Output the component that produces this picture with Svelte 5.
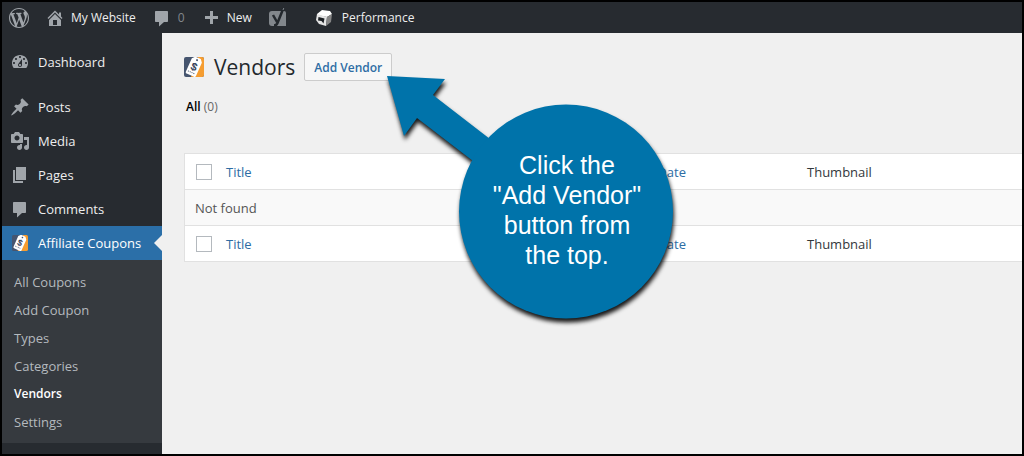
<script lang="ts">
	interface MenuItem {
		label: string;
		icon: string;
	}

	const icons = {
		wordpress:
			'M20 10c0-5.51-4.49-10-10-10C4.48 0 0 4.49 0 10c0 5.52 4.48 10 10 10 5.51 0 10-4.48 10-10zM7.78 15.37L4.37 6.22c.55-.02 1.17-.08 1.17-.08.5-.06.44-1.13-.06-1.11 0 0-1.45.11-2.37.11-.18 0-.37 0-.58-.01C4.12 2.69 6.87 1.11 10 1.11c2.33 0 4.45.87 6.05 2.34-.68-.11-1.65.39-1.65 1.58 0 .74.45 1.36.9 2.1.35.61.55 1.36.55 2.46 0 1.49-1.4 5-1.4 5l-3.03-8.37c.54-.02.82-.17.82-.17.5-.05.44-1.25-.06-1.22 0 0-1.44.12-2.38.12-.87 0-2.33-.12-2.33-.12-.5-.03-.56 1.2-.06 1.22l.92.08 1.26 3.41zM17.41 10c.24-.64.74-1.87.43-4.25.7 1.29 1.05 2.71 1.05 4.25 0 3.29-1.73 6.24-4.4 7.78.97-2.59 1.94-5.2 2.92-7.78zM6.1 18.09C3.12 16.65 1.11 13.53 1.11 10c0-1.3.23-2.48.72-3.59C3.25 10.3 4.67 14.2 6.1 18.09zm4.03-6.63l2.58 6.98c-.86.29-1.76.45-2.71.45-.79 0-1.57-.11-2.29-.33.81-2.38 1.62-4.74 2.42-7.1z',
		home: 'M16 8.5l1.53 1.53-1.06 1.06L10 4.6l-6.47 6.49-1.06-1.06L10 2.5l4 4v-2h2v4zm-6-2.46l6 5.99V18H4v-5.97zM12 17v-5H8v5h4z',
		comment:
			'M4 3h11c.6 0 1 .4 1 1v9c0 .6-.4 1-1 1h-3l-5 4.500v-4.500H4c-.6 0-1-.4-1-1V4c0-.6.4-1 1-1z',
		plus: 'M17 8v3h-5v5H9v-5H4V8h5V3h3v5h5z',
		dashboard:
			'M3.76 16h12.48c1.1-1.37 1.76-3.11 1.76-5 0-4.42-3.58-8-8-8s-8 3.58-8 8c0 1.89.66 3.63 1.76 5zM10 4c.55 0 1 .45 1 1s-.45 1-1 1-1-.45-1-1 .45-1 1-1zM6 6c.55 0 1 .45 1 1s-.45 1-1 1-1-.45-1-1 .45-1 1-1zm8 0c.55 0 1 .45 1 1s-.45 1-1 1-1-.45-1-1 .45-1 1-1zm-5.37 5.55L12 7v6c0 1.1-.9 2-2 2s-2-.9-2-2c0-.57.24-1.08.63-1.45zM4 10c.55 0 1 .45 1 1s-.45 1-1 1-1-.45-1-1 .45-1 1-1zm12 0c.55 0 1 .45 1 1s-.45 1-1 1-1-.45-1-1 .45-1 1-1zm-5 3c0-.55-.45-1-1-1s-1 .45-1 1 .45 1 1 1 1-.45 1-1z',
		posts: 'M10.44 3.02l1.82-1.82 6.36 6.35-1.83 1.82c-1.05-.68-2.48-.57-3.41.36l-.75.75c-.92.93-1.04 2.35-.35 3.41l-1.83 1.82-2.41-2.41-2.8 2.79c-.42.42-3.38 2.71-3.8 2.29s1.86-3.39 2.28-3.81l2.79-2.79L4.1 9.36l1.83-1.82c1.05.69 2.48.57 3.4-.36l.75-.75c.93-.92 1.05-2.35.36-3.41z',
		media: 'M13 11V4c0-.55-.45-1-1-1h-1.67L9 1H5L3.67 3H2c-.55 0-1 .45-1 1v7c0 .55.45 1 1 1h10c.55 0 1-.45 1-1zM7 4.5c1.38 0 2.5 1.12 2.5 2.5S8.38 9.5 7 9.5 4.5 8.38 4.5 7 5.62 4.5 7 4.5zM14 6h5v10.5c0 1.38-1.12 2.5-2.5 2.5S14 17.88 14 16.5s1.12-2.5 2.5-2.5c.17 0 .34.02.5.05V9h-3V6zm-4 8.05V13h2v3.5c0 1.38-1.12 2.5-2.5 2.5S7 17.88 7 16.5 8.12 14 9.5 14c.17 0 .34.02.5.05z',
		pages: 'M6 15V2h10v13H6zm-1 1h8v2H3V5h2v11z'
	};

	const contentMenu: MenuItem[] = [
		{ label: 'Posts', icon: icons.posts },
		{ label: 'Media', icon: icons.media },
		{ label: 'Pages', icon: icons.pages },
		{ label: 'Comments', icon: icons.comment }
	];

	const submenu = ['All Coupons', 'Add Coupon', 'Types', 'Categories', 'Vendors', 'Settings'];
	const current = 'Vendors';

	let allChecked = $state(false);
</script>

{#snippet dashicon(path: string)}
	<svg class="icon" viewBox="0 0 20 20" aria-hidden="true"><path d={path} /></svg>
{/snippet}

{#snippet couponLogo(size: number)}
	<svg class="logo" width={size} height={size} viewBox="0 0 20 20" aria-hidden="true">
		<rect width="20" height="20" rx="2" fill="#46556f" />
		<path d="M14 0h4a2 2 0 0 1 2 2v16a2 2 0 0 1-2 2H7z" fill="#f59d31" />
		<g transform="rotate(24 10 10)">
			<path d="M7 0h6l2.500 3v14.500a1.500 1.500 0 0 1-1.500 1.500H6a1.500 1.500 0 0 1-1.500-1.500V3z" fill="#fff" />
			<circle cx="10" cy="2.500" r="1" fill="#46556f" />
			<path d="M6 16h8" stroke="#46556f" stroke-dasharray="1 1" />
			<text x="10" y="13.500" text-anchor="middle">$</text>
		</g>
	</svg>
{/snippet}

{#snippet columns(position: string)}
	<tr>
		<td class="check">
			<input type="checkbox" aria-label="Select all ({position})" bind:checked={allChecked} />
		</td>
		<th scope="col"><a href="#title">Title</a></th>
		<th scope="col" class="date"><a href="#date">Date</a></th>
		<th scope="col" class="thumbnail">Thumbnail</th>
	</tr>
{/snippet}

<div class="admin">
	<header class="adminbar">
		<a class="wp" href="#about" aria-label="About WordPress">{@render dashicon(icons.wordpress)}</a>
		<a class="site" href="#site">{@render dashicon(icons.home)}<span>My Website</span></a>
		<a class="count" href="#comments">{@render dashicon(icons.comment)}<span>0</span></a>
		<a class="new" href="#new">{@render dashicon(icons.plus)}<span>New</span></a>
		<a class="seo" href="#seo" aria-label="SEO">
			<svg class="icon" viewBox="0 0 20 20" aria-hidden="true">
				<path d="M4 3h12a2 2 0 0 1 2 2v13H4a3 3 0 0 1-3-3V6a3 3 0 0 1 3-3z" />
				<path d="M5 7l4 7M15.500 0l-6 15q-1 2.500-3.500 2.500" fill="none" stroke="#23282d" stroke-width="2.500" />
				<path d="M15.800 0l-.8 2" stroke="#82878c" />
			</svg>
		</a>
		<a class="performance" href="#performance">
			<svg class="icon" viewBox="0 0 20 20" aria-hidden="true">
				<path d="M3 6l5-4 8 1 2 3-5 3-10-2z" fill="#fff" />
				<path d="M3 6l10 3-1 9-7-2-3-4z" fill="#e4e4e4" />
				<path d="M13 9l5-3-1 8-5 4z" fill="#858585" />
				<path d="M4.500 9l6 1.500-1 5-2-2.500-3.500-.5z" fill="#1c2024" />
			</svg>
			<span>Performance</span>
		</a>
	</header>

	<div class="body">
		<nav class="sidebar" aria-label="Main menu">
			<a class="item" href="#dashboard">{@render dashicon(icons.dashboard)}Dashboard</a>
			<div class="separator"></div>
			{#each contentMenu as item (item.label)}
				<a class="item" href="#{item.label.toLowerCase()}">{@render dashicon(item.icon)}{item.label}</a>
			{/each}
			<a class="item active" href="#coupons">
				<span class="icon">{@render couponLogo(16)}</span>Affiliate Coupons
			</a>
			<ul class="submenu">
				{#each submenu as label (label)}
					<li><a href="#{label}" class:current={label === current}>{label}</a></li>
				{/each}
			</ul>
		</nav>

		<main>
			<div class="heading">
				{@render couponLogo(20)}
				<h1>Vendors</h1>
				<button type="button">Add Vendor</button>
			</div>
			<p class="filter"><a href="#all">All</a> <span>(0)</span></p>

			<table>
				<thead>{@render columns('top')}</thead>
				<tbody>
					<tr><td class="empty" colspan="4">Not found</td></tr>
				</tbody>
				<tfoot>{@render columns('bottom')}</tfoot>
			</table>

			<div class="callout">
				<svg width="300" height="260" viewBox="0 0 300 260" aria-hidden="true">
					<path d="M7 6l58 3-12 16 57 44-17 22-56-43-13 18z" />
					<circle cx="186" cy="141.500" r="107" />
				</svg>
				<p>Click the<br />"Add Vendor"<br />button from<br />the top.</p>
			</div>
		</main>
	</div>
</div>

<style>
	:global(body) {
		margin: 0;
	}

	.admin {
		box-sizing: border-box;
		min-height: 100vh;
		display: flex;
		flex-direction: column;
		border: 2px solid #000;
		background: #f0f0f0;
		color: #32373c;
		font: 13px/20px 'Open Sans', 'Noto Sans', sans-serif;
	}

	a {
		color: #2e6da4;
		text-decoration: none;
	}

	.icon {
		width: 20px;
		height: 20px;
		flex: none;
		fill: #a0a5aa;
	}

	.logo {
		display: block;
		flex: none;
	}

	.logo text {
		font: bold 11px 'Liberation Sans', sans-serif;
		fill: #35435c;
	}

	.adminbar {
		display: flex;
		align-items: center;
		height: 31px;
		padding-left: 7px;
		background: #272b30;
		font-size: 12px;
	}

	.adminbar a {
		display: flex;
		align-items: center;
		gap: 6px;
		margin-right: 16px;
		color: #eee;
	}

	.adminbar .count {
		color: #82878c;
	}

	.adminbar .seo {
		margin-right: 26px;
	}

	.adminbar .seo .icon {
		fill: #82878c;
	}

	.adminbar .performance {
		gap: 8px;
	}

	.body {
		flex: 1;
		display: flex;
	}

	.sidebar {
		width: 160px;
		flex: none;
		padding-top: 12px;
		background: #272b30;
	}

	.item {
		position: relative;
		display: flex;
		align-items: center;
		gap: 8px;
		height: 34px;
		padding-left: 8px;
		color: #eee;
	}

	.separator {
		height: 11px;
	}

	.active {
		background: #2b6fa8;
		color: #fff;
	}

	.active .icon {
		display: grid;
		place-items: center;
	}

	.active::after {
		content: '';
		position: absolute;
		right: 0;
		border: 8px solid transparent;
		border-right-color: #f0f0f0;
	}

	.submenu {
		margin: 0;
		padding: 8px 0 7px;
		background: #363a3f;
		list-style: none;
	}

	.submenu a {
		display: block;
		padding: 4px 12px;
		color: #b4b9be;
	}

	.submenu .current {
		color: #fff;
		font-size: 12px;
		font-weight: 600;
	}

	main {
		position: relative;
		flex: 1;
		min-width: 0;
		padding: 17px 0 0 22px;
	}

	.heading {
		display: flex;
		align-items: center;
		height: 34px;
	}

	h1 {
		margin: 0 9px 0 10px;
		color: #23282d;
		font-size: 21px;
		font-weight: 400;
	}

	button {
		height: 28px;
		padding: 0 9px;
		border: 1px solid #ccc;
		border-radius: 2px;
		background: #f7f7f7;
		color: #2e6da4;
		font: 600 12px 'Open Sans', sans-serif;
	}

	.filter {
		margin: 13px 0 36px;
		padding-left: 2px;
		color: #666;
		font-size: 12px;
	}

	.filter a {
		color: #000;
		font-weight: 600;
	}

	table {
		width: 100%;
		table-layout: fixed;
		border: 1px solid #e1e1e1;
		border-right: 0;
		border-spacing: 0;
		background: #fff;
	}

	th,
	td {
		box-sizing: border-box;
		height: 35px;
		padding: 0 10px;
		font-weight: 400;
		text-align: left;
	}

	.check {
		width: 31px;
		padding: 0 0 0 11px;
	}

	.date {
		width: 18%;
		padding-left: 12px;
	}

	.thumbnail {
		width: 27%;
		padding-left: 11px;
	}

	.empty {
		height: 37px;
		border: 1px solid #e1e1e1;
		border-width: 1px 0;
		background: #f9f9f9;
		color: #555;
	}

	input {
		appearance: none;
		display: block;
		width: 16px;
		height: 16px;
		margin: 0;
		border: 1px solid #b4b9be;
		background: #fff;
	}

	input:checked {
		background: #2b6fa8;
	}

	/* floats over the list, arrow tip at the Add Vendor button */
	.callout {
		position: absolute;
		top: 37px;
		left: 218px;
		width: 300px;
		height: 260px;
		pointer-events: none;
	}

	.callout svg {
		display: block;
		overflow: visible;
		fill: #0073aa;
		filter: drop-shadow(1px 4px 2px rgba(0, 0, 0, 0.9));
	}

	.callout p {
		position: absolute;
		top: 80px;
		left: 87px;
		width: 200px;
		margin: 0;
		color: #fff;
		font: 25px/30px 'Liberation Sans', Arial, sans-serif;
		text-align: center;
	}
</style>
